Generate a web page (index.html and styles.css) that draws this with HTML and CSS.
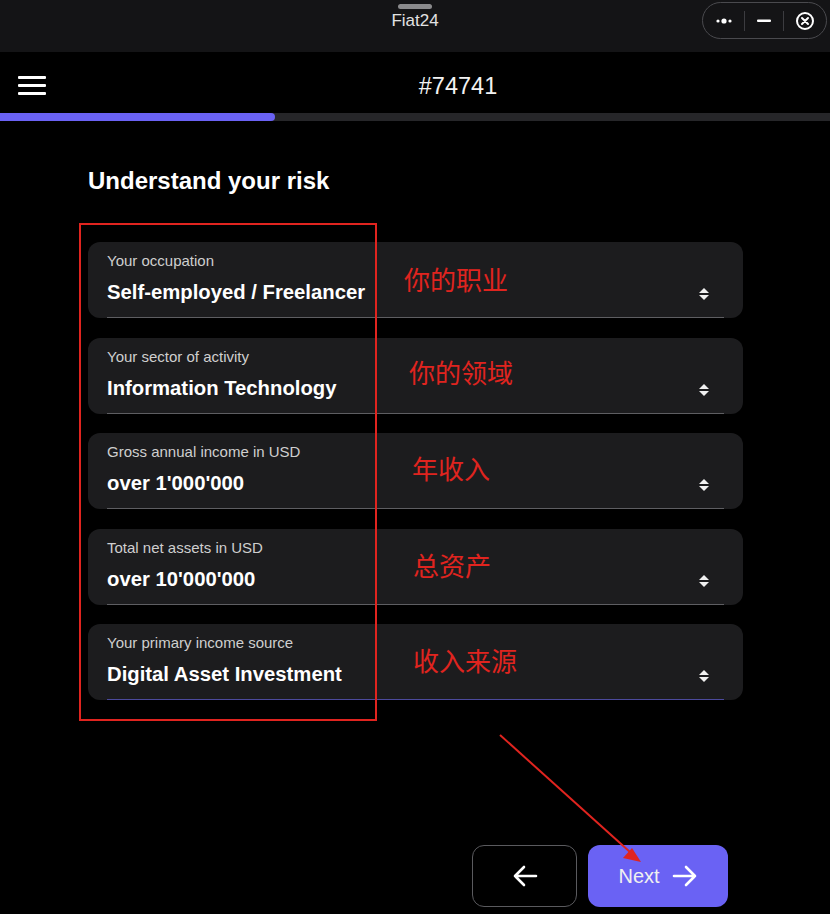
FILE: index.html
```html
<!DOCTYPE html>
<html lang="en">
<head>
  <meta charset="UTF-8">
  <title>Fiat24</title>
  <link rel="stylesheet" href="styles.css">
</head>
<body>

  <!-- Window bar -->
  <div class="window-bar">
    <div class="handle"></div>
    <div class="window-title">Fiat24</div>
    <div class="capsule">
      <span class="cap-btn">
        <svg width="18" height="8" viewBox="0 0 18 8"><circle cx="3" cy="4" r="1.6" fill="#fff"/><circle cx="9" cy="4" r="2.6" fill="#fff"/><circle cx="15" cy="4" r="1.6" fill="#fff"/></svg>
      </span>
      <span class="cap-sep"></span>
      <span class="cap-btn">
        <svg width="16" height="4" viewBox="0 0 16 4"><rect x="1" y="0.5" width="14" height="2.4" rx="1" fill="#fff"/></svg>
      </span>
      <span class="cap-sep"></span>
      <span class="cap-btn">
        <svg width="20" height="20" viewBox="0 0 20 20"><circle cx="10" cy="10" r="8" fill="none" stroke="#fff" stroke-width="2"/><path d="M7 7l6 6M13 7l-6 6" stroke="#fff" stroke-width="2" stroke-linecap="round"/></svg>
      </span>
    </div>
  </div>

  <!-- App header -->
  <div class="app-header">
    <div class="menu">
      <span></span><span></span><span></span>
    </div>
    <div class="app-title">#74741</div>
  </div>
  <div class="progress"><div class="progress-fill" style="width: 275px;"></div></div>

  <!-- Form -->
  <div class="content">
    <div class="heading">Understand your risk</div>

    <div class="fields">
      <div class="field">
        <div class="field-label">Your occupation</div>
        <div class="field-value">Self-employed / Freelancer</div>
        <span class="note" style="left: 316px; top: 24px;">你的职业</span>
        <span class="sort-icon"></span>
      </div>
      <div class="field">
        <div class="field-label">Your sector of activity</div>
        <div class="field-value">Information Technology</div>
        <span class="note" style="left: 321px; top: 21px;">你的领域</span>
        <span class="sort-icon"></span>
      </div>
      <div class="field">
        <div class="field-label">Gross annual income in USD</div>
        <div class="field-value">over 1'000'000</div>
        <span class="note" style="left: 324px; top: 22px;">年收入</span>
        <span class="sort-icon"></span>
      </div>
      <div class="field">
        <div class="field-label">Total net assets in USD</div>
        <div class="field-value">over 10'000'000</div>
        <span class="note" style="left: 325px; top: 23px;">总资产</span>
        <span class="sort-icon"></span>
      </div>
      <div class="field active">
        <div class="field-label">Your primary income source</div>
        <div class="field-value">Digital Asset Investment</div>
        <span class="note" style="left: 325px; top: 23px;">收入来源</span>
        <span class="sort-icon"></span>
      </div>

      <div class="mark-box"></div>
    </div>
  </div>

  <!-- Footer buttons -->
  <div class="actions">
    <div class="btn btn-back">
      <svg width="26" height="22" viewBox="0 0 26 22"><path d="M24 11H3M12 2L3 11l9 9" fill="none" stroke="#fff" stroke-width="2.6" stroke-linecap="round" stroke-linejoin="round"/></svg>
    </div>
    <div class="btn btn-next">
      <span>Next</span>
      <svg width="26" height="22" viewBox="0 0 26 22"><path d="M2 11h21M14 2l9 9-9 9" fill="none" stroke="#fff" stroke-width="2.6" stroke-linecap="round" stroke-linejoin="round"/></svg>
    </div>
  </div>

  <!-- pointer arrow drawn over the page -->
  <svg class="pointer" width="830" height="914" viewBox="0 0 830 914">
    <line x1="500" y1="735" x2="630" y2="852" stroke="#e0241f" stroke-width="2"/>
    <path d="M641 862l-18-4 9-10z" fill="#e0241f"/>
  </svg>

</body>
</html>
```

FILE: styles.css
```css
body {
  margin: 0;
  background-color: #000;
  color: #fff;
  font-family: "Liberation Sans", Arial, sans-serif;
  width: 830px;
  height: 914px;
  overflow: hidden;
  position: relative;
}

/* Window bar */
.window-bar {
  height: 52px;
  background-color: #141416;
  position: relative;
  display: flex;
  justify-content: center;
}

.handle {
  position: absolute;
  top: 4px;
  left: 398px;
  width: 34px;
  height: 5px;
  border-radius: 3px;
  background-color: #8a8a8c;
}

.window-title {
  margin-top: 11px;
  font-size: 17px;
  color: #e2e2e2;
}

.capsule {
  position: absolute;
  top: 2px;
  right: 3px;
  width: 125px;
  height: 37px;
  border: 1px solid #4a4a4e;
  border-radius: 20px;
  display: flex;
  align-items: center;
  justify-content: space-between;
  padding: 0 11px 0 12px;
  box-sizing: border-box;
}

.cap-btn {
  display: flex;
  align-items: center;
}

.cap-sep {
  width: 1px;
  height: 20px;
  background-color: #3c3c40;
}

/* App header */
.app-header {
  height: 61px;
  display: flex;
  align-items: center;
}

.menu {
  width: 86px;
  padding-left: 18px;
  margin-top: 5px;
  box-sizing: border-box;
  display: flex;
  flex-direction: column;
  gap: 5px;
}

.menu span {
  display: block;
  width: 28px;
  height: 3px;
  border-radius: 1px;
  background-color: #fff;
}

.app-title {
  flex: 1;
  text-align: center;
  font-size: 23.5px;
  color: #f2f2f2;
  margin-top: 7px;
}

.progress {
  height: 8px;
  background-color: #262629;
}

.progress-fill {
  height: 100%;
  background-color: #6a62f4;
  border-radius: 0 4px 4px 0;
}

/* Form */
.content {
  padding: 46px 0 0 88px;
  width: 655px;
}

.heading {
  font-size: 24px;
  font-weight: bold;
  margin-bottom: 47px;
}

.fields {
  position: relative;
  display: flex;
  flex-direction: column;
  gap: 19.5px;
}

.field {
  position: relative;
  height: 76px;
  background-color: #1c1c1e;
  border-radius: 12px;
  padding: 10px 19px 0;
  box-sizing: border-box;
}

.field::after {
  content: "";
  position: absolute;
  left: 19px;
  right: 19px;
  bottom: 0;
  height: 1px;
  background-color: #5e5e62;
}

.field.active::after {
  background-color: #4c4a9c;
}

.field-label {
  font-size: 15px;
  color: #cfcfcf;
}

.field-value {
  margin-top: 12px;
  font-size: 20.3px;
  font-weight: bold;
  color: #fff;
}

.sort-icon {
  position: absolute;
  right: 34px;
  top: 46px;
  width: 10px;
  height: 12px;
}

.sort-icon::before,
.sort-icon::after {
  content: "";
  position: absolute;
  left: 0;
  border-left: 5px solid transparent;
  border-right: 5px solid transparent;
}

.sort-icon::before {
  top: 0;
  border-bottom: 5px solid #f0f0f0;
}

.sort-icon::after {
  bottom: 0;
  border-top: 5px solid #f0f0f0;
}

/* red notes laid over the form */
.note {
  position: absolute;
  font-family: "Noto Sans CJK SC", sans-serif;
  font-size: 26px;
  line-height: 1;
  color: #e0241f;
}

.mark-box {
  position: absolute;
  left: -9px;
  top: -19px;
  width: 294px;
  height: 494px;
  border: 2px solid #e0241f;
}

/* Footer buttons */
.actions {
  position: absolute;
  bottom: 7px;
  right: 102px;
  display: flex;
  gap: 11px;
}

.btn {
  height: 62px;
  border-radius: 12px;
  box-sizing: border-box;
  display: flex;
  align-items: center;
  justify-content: center;
}

.btn-back {
  width: 105px;
  border: 1px solid #5a5a5e;
}

.btn-next {
  width: 140px;
  background-color: #6a62f4;
  gap: 12px;
  font-size: 20px;
  color: #f0f0f0;
}

.pointer {
  position: absolute;
  top: 0;
  left: 0;
  pointer-events: none;
}
```
